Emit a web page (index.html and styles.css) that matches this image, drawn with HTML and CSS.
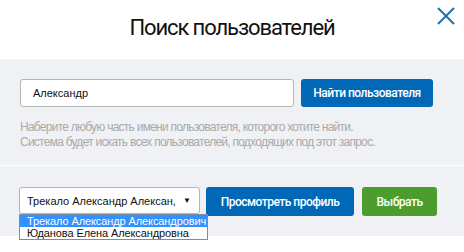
FILE: index.html
```html
<!DOCTYPE html>
<html lang="ru">
<head>
    <meta charset="UTF-8">
    <title>Поиск пользователей</title>
    <link rel="stylesheet" href="styles.css">
</head>
<body>
    <div class="modal">
        <div class="modal-header">
            <h1>Поиск пользователей</h1>
            <button class="close-button" aria-label="Закрыть">
                <svg width="18" height="18" viewBox="0 0 18 18">
                    <path d="M1 1 L17 17 M17 1 L1 17" stroke="#1b72ad" stroke-width="2" fill="none"/>
                </svg>
            </button>
        </div>
        <div class="modal-body">
            <div class="search-row">
                <input type="text" class="search-input" value="Александр">
                <button class="btn btn-blue">Найти пользователя</button>
            </div>
            <p class="hint">Наберите любую часть имени пользователя, которого хотите найти.<br>Система будет искать всех пользователей, подходящих под этот запрос.</p>
            <div class="divider"></div>
            <div class="result-row">
                <div class="select-wrap">
                    <div class="fake-select">
                        <span class="select-text">Трекало Александр Алексан,</span>
                        <span class="arrow">&#9660;</span>
                    </div>
                    <ul class="options">
                        <li class="selected">Трекало Александр Александрович</li>
                        <li>Юданова Елена Александровна</li>
                    </ul>
                </div>
                <button class="btn btn-blue btn-profile">Просмотреть профиль</button>
                <button class="btn btn-green">Выбрать</button>
            </div>
        </div>
    </div>
</body>
</html>
```

FILE: styles.css
```css
body {
    margin: 0;
    font-family: "Liberation Sans", Arial, sans-serif;
    background: white;
}

.modal {
    width: 464px;
    height: 252px;
    background: white;
}

.modal-header {
    height: 59px;
    box-sizing: border-box;
    padding-top: 15px;
    display: flex;
    justify-content: center;
    align-items: flex-start;
    position: relative;
}

.modal-header h1 {
    margin: 0;
    font-family: Roboto, sans-serif;
    font-weight: 400;
    font-size: 22px;
    line-height: 26px;
    letter-spacing: -1.1px;
    color: #111;
}

.close-button {
    position: absolute;
    top: 7px;
    right: 9px;
    background: none;
    border: none;
    padding: 0;
    width: 18px;
    height: 18px;
    cursor: pointer;
}

.close-button svg {
    display: block;
}

.modal-body {
    background: #f0f1f5;
    padding: 20px 0 0 0;
    height: 157px;
}

.search-row {
    display: flex;
    padding: 0 20px;
    gap: 7px;
}

.search-input {
    box-sizing: border-box;
    width: 274px;
    height: 28px;
    border: 1px solid #b5b5b5;
    border-radius: 3px;
    padding: 0 12px;
    font-family: "Liberation Sans", Arial, sans-serif;
    font-size: 11px;
    color: #111;
    background: white;
}

.btn {
    border: none;
    border-radius: 3px;
    color: white;
    font-family: Roboto, sans-serif;
    font-weight: 500;
    font-size: 12px;
    letter-spacing: -0.5px;
    cursor: pointer;
}

.btn-blue {
    background: #0068b7;
    width: 132px;
    height: 28px;
}

.hint {
    margin: 13px 0 0 0;
    padding: 0 20px;
    font-size: 12px;
    line-height: 15px;
    letter-spacing: -0.75px;
    color: #a9a9a9;
}

.divider {
    margin-top: 15px;
    height: 1px;
    background: white;
}

.result-row {
    display: flex;
    align-items: flex-start;
    padding: 21px 20px 0 19px;
}

.select-wrap {
    position: relative;
    width: 181px;
}

.fake-select {
    box-sizing: border-box;
    height: 27px;
    border: 1px solid #b5b5b5;
    border-radius: 3px;
    background: white;
    display: flex;
    align-items: center;
    padding: 0 8px 0 7px;
    font-size: 11px;
    color: #111;
}

.select-text {
    flex: 1;
    white-space: nowrap;
    overflow: hidden;
}

.arrow {
    font-size: 8px;
    margin-left: 6px;
}

.options {
    position: absolute;
    top: 27px;
    left: 0;
    margin: 0;
    padding: 0;
    list-style: none;
    width: 189px;
    box-sizing: border-box;
    border: 1px solid #7a8ea6;
    background: white;
    font-size: 11px;
    letter-spacing: -0.1px;
    color: #111;
}

.options li {
    height: 12px;
    line-height: 12px;
    padding: 0 2px 0 7px;
    white-space: nowrap;
}

.options li.selected {
    background: #3390ff;
    color: white;
}

.btn-profile {
    width: 148px;
    height: 29px;
    margin-left: 6px;
}

.btn-green {
    background: #4d9c2e;
    width: 75px;
    height: 29px;
    margin-left: 8px;
}
```
